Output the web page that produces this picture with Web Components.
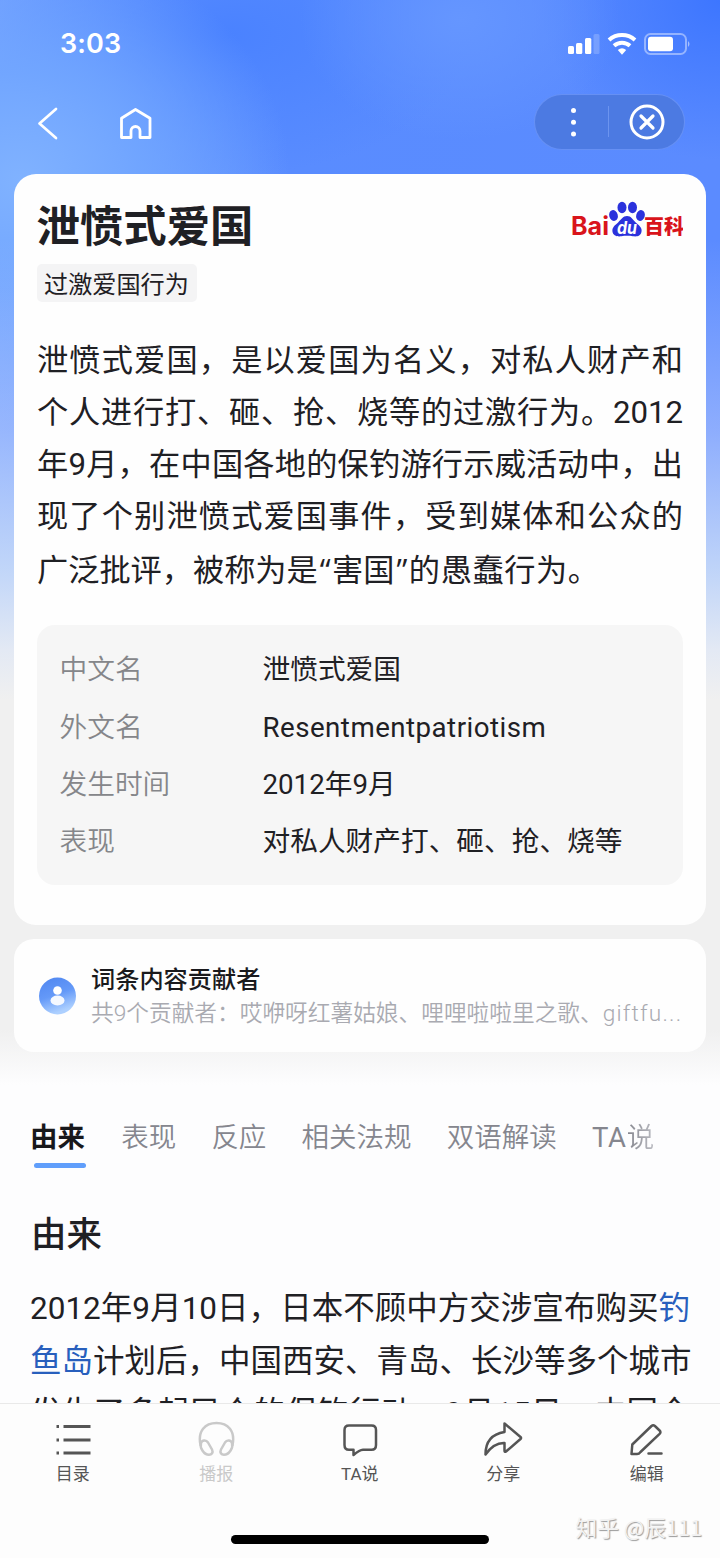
<!DOCTYPE html>
<html lang="zh-CN"><head><meta charset="utf-8"><title>泄愤式爱国</title>
<style>
html,body{margin:0;padding:0;width:720px;height:1558px;overflow:hidden;background:#fdfdfe}
body{font-family:Roboto,"Noto Sans CJK SC",sans-serif;color:#1f2024}
</style></head><body>
<baike-app></baike-app>
<script>
function define(name, css, html){
  customElements.define(name, class extends HTMLElement{
    constructor(){
      super();
      const t=document.createElement('template');
      t.innerHTML='<style>*{box-sizing:border-box}:host{display:block;box-sizing:border-box}'+css+'</style>'+html;
      this.attachShadow({mode:'open'}).appendChild(t.content.cloneNode(true));
    }
  });
}

define('text-line', `
:host{height:52px;line-height:52px;white-space:nowrap;text-align:justify;text-align-last:justify;text-spacing-trim:space-all}
:host([natural]){text-align-last:left}
`, `<slot></slot>`);

define('status-bar', `
:host{height:87px;padding:0 29px 0 60px;display:flex;align-items:center;justify-content:space-between;color:#fff}
span{font:600 27px/34px Inter,sans-serif;letter-spacing:.1px}
svg{display:block}
`, `<span>3:03</span>
<svg width="124" height="26" viewBox="0 0 124 26" fill="#fff">
<rect x="1" y="15" width="6" height="8" rx="1.5"/><rect x="9" y="12" width="6.3" height="11" rx="1.5"/><rect x="18" y="7" width="6.3" height="16" rx="1.5"/><rect x="26.500" y="3" width="6" height="20" rx="1.500" opacity=".2"/>
<g fill="none" stroke="#fff" stroke-width="4"><path d="M42 9a19.500 19.500 0 0 1 26 0"/><path d="M47 14.800a12 12 0 0 1 16 0"/></g><path d="M50.800 19a6.500 6.500 0 0 1 8.400 0L55 23.800Z"/>
<rect x="78" y="3" width="41" height="20" rx="5.500" fill="none" stroke="#fff" stroke-opacity=".42" stroke-width="2"/><rect x="81" y="5.800" width="25" height="14.500" rx="3"/><path d="M121 10q3 3 0 6z" opacity=".5"/>
</svg>`);

define('nav-bar', `
:host{height:87px;padding:8px 36px 0 35px;display:flex;align-items:flex-start;justify-content:space-between}
.left{display:flex;gap:56px;padding-top:10px}
.pill{display:flex;align-items:center;width:149px;height:54px;border-radius:27px;background:#4c7ae2;box-shadow:0 0 0 1px #6690f4;margin-top:0}
svg{display:block}
`, `<div class="left">
<svg width="28" height="36" viewBox="0 0 28 36" fill="none" stroke="#fff" stroke-width="2.700" stroke-linecap="round" stroke-linejoin="round"><path d="M21 4 4.500 18.500 21 33"/></svg>
<svg width="36" height="36" viewBox="0 0 36 36" fill="none" stroke="#fff" stroke-width="2.800" stroke-linejoin="round"><path d="M16.500 4.500 31 13.300V32.500H21V26a4.500 4.500 0 0 0-9 0v6.500H2.500V13.300Z"/></svg>
</div>
<div class="pill"><svg width="149" height="54" viewBox="0 0 149 54"><g fill="#fff"><circle cx="38.500" cy="15.500" r="2.500"/><circle cx="38.500" cy="27.300" r="2.500"/><circle cx="38.500" cy="39" r="2.500"/></g><path d="M73.500 11v31" stroke="#6c94ef"/><g fill="none" stroke="#fff" stroke-width="3"><circle cx="112" cy="27" r="16"/><path d="m106 21 12 12m0-12-12 12" stroke-width="3.200" stroke-linecap="round"/></g></svg></div>`);

define('baike-logo', `
:host{display:grid;width:112px;height:42px}
svg{grid-area:1/1}
`, `<svg width="112" height="42" viewBox="0 0 112 42">
<g fill="#2b32dc"><ellipse cx="42.500" cy="17.500" rx="4.300" ry="5.500" transform="rotate(-15 42.500 17.500)"/><ellipse cx="51" cy="9.500" rx="4.500" ry="5.700"/><ellipse cx="61.500" cy="9.500" rx="4.500" ry="5.700"/><ellipse cx="69.500" cy="17.500" rx="4.300" ry="5.500" transform="rotate(15 69.500 17.500)"/><path d="M56 18c4.200 0 5.700 3.500 8.700 6.500 3.200 2.800 6.700 5.200 5.800 9.300-.8 4.600-5 5-8.600 4.500-3.500-.6-8-.6-11.500 0-4 .6-8.500-.3-9-5-.4-4.200 2.800-6.100 5.700-8.800C50 21.500 52 18 56 18Z"/></g>
<text x="0" y="36.700" font-family="Inter" font-weight="700" font-size="25" fill="#d9141b" textLength="38" lengthAdjust="spacingAndGlyphs">Bai</text>
<text x="46" y="36.200" font-family="Inter" font-weight="700" font-style="italic" font-size="17.500" fill="#fff" textLength="20" lengthAdjust="spacingAndGlyphs">du</text>
<text x="73" y="36.200" font-family="Noto Sans CJK SC" font-weight="900" font-size="20" fill="#d9141b" textLength="40">百科</text></svg>`);

define('info-row', `
:host{display:grid;grid-template-columns:203px 1fr;height:57.400px;align-items:center;font-size:27.700px;line-height:40px;white-space:nowrap;text-spacing-trim:space-all}
.k{color:#85868a;font-weight:350}
`, `<span class="k"><slot name="key"></slot></span><span><slot></slot></span>`);

define('summary-card', `
:host{height:751px;border-radius:22px;background:#fefefe;padding:23px 23px 0}
header{display:flex;justify-content:space-between;height:67px}
h1{margin:2.500px 0 0 -.500px;font-size:43.400px;line-height:56px;font-weight:700}
baike-logo{margin-top:1px}
.tag{display:inline-block;height:38px;padding:1.500px 8px 0 7px;border-radius:5px;background:#f4f4f5;font-size:24.150px;line-height:38px;vertical-align:top}
.intro{margin-top:32.500px;height:260px;font-size:31.200px}
.info{margin-top:30.500px;height:260px;border-radius:18px;background:#f6f6f6;padding:16.500px 23px 0 22.500px}
.q{font-family:"Open Sans";letter-spacing:3.500px;position:relative;left:2px}
`, `<header><h1>泄愤式爱国</h1><baike-logo></baike-logo></header>
<span class="tag">过激爱国行为</span>
<div class="intro"><text-line>泄愤式爱国，是以爱国为名义，对私人财产和</text-line><text-line>个人进行打、砸、抢、烧等的过激行为。2012</text-line><text-line>年9月，在中国各地的保钓游行示威活动中，出</text-line><text-line>现了个别泄愤式爱国事件，受到媒体和公众的</text-line><text-line natural>广泛批评，被称为是<span class="q">“</span>害国<span class="q">”</span><span style="letter-spacing:.6px">的愚蠢行为。</span></text-line></div>
<div class="info"><info-row><span slot="key">中文名</span>泄愤式爱国</info-row><info-row><span slot="key">外文名</span><span style="letter-spacing:.47px">Resentmentpatriotism</span></info-row><info-row><span slot="key">发生时间</span>2012年9月</info-row><info-row><span slot="key">表现</span>对私人财产打、砸、抢、烧等</info-row></div>`);

define('contributor-card', `
:host{display:flex;height:113px;margin-top:14px;border-radius:20px;background:#fefefe;padding:23px 23px 0 25px;gap:15px}
svg{flex:none;margin-top:14.500px}
div{flex:1;min-width:0;white-space:nowrap;text-spacing-trim:space-all}
b{display:block;font-size:24.200px;line-height:35px;font-weight:500;color:#1a1a1d;padding-top:1px}
text-line{height:32px;line-height:32px;font-size:22.700px;font-weight:350;color:#a9aab1;width:588px}
i{font-style:normal;font-weight:300;letter-spacing:1.200px}
`, `<svg width="37" height="38" viewBox="0 0 37 38"><defs><linearGradient id="g" x1="0" y1="0" x2=".35" y2="1"><stop stop-color="#4f86f0"/><stop offset=".55" stop-color="#6499f8"/><stop offset="1" stop-color="#add0ff"/></linearGradient></defs><circle cx="18.500" cy="19" r="18.500" fill="url(#g)"/><circle cx="18.500" cy="13.500" r="4.300" fill="#fff"/><ellipse cx="18.500" cy="23.500" rx="7" ry="5" fill="#f4f8ff"/></svg>
<div><b>词条内容贡献者</b><text-line>共9个贡献者：哎咿呀红薯姑娘、哩哩啦啦里之歌、<i>giftfu...</i></text-line></div>`);

define('section-tabs', `
:host{display:flex;gap:35.200px;height:60px;margin-top:66px;padding-left:30px;font-size:27.500px;line-height:40px;color:#85868e;font-weight:350;white-space:nowrap}
.on{color:#18181b;font-weight:700}
.on::after{content:"";display:block;width:52px;height:5px;border-radius:2.500px;background:#609efb;margin:5px 0 0 4px}
`, `<span class="on">由来</span><span>表现</span><span>反应</span><span>相关法规</span><span>双语解读</span><span><span style="letter-spacing:.8px;font-weight:400">TA</span><span style="background:linear-gradient(90deg,#85868e,#bbbcc2);-webkit-background-clip:text;color:transparent">说</span></span>`);

define('article-section', `
:host{height:225px;overflow:hidden;padding:32px 30px 0;font-size:31.500px}
h2{margin:0 0 0 1px;font-size:35.500px;line-height:50px;font-weight:500;height:70px}
text-line{height:52.500px}
a{color:#285fbd}
.body{margin-top:3px}
`, `<h2>由来</h2><div class="body"><text-line>2012年9月10日，日本不顾中方交涉宣布购买<a>钓</a></text-line><text-line><a>鱼岛</a>计划后，中国西安、青岛、长沙等多个城市</text-line><text-line>发生了多起民众的保钓行动。9月15日，中国全</text-line></div>`);

define('tool-item', `
:host{display:flex;flex-direction:column;align-items:center;padding-top:14px;font-size:17px;line-height:24px;color:#555}
:host([muted]){color:#c9c9c9}
::slotted(svg){display:block;width:40px;height:40px;fill:none;stroke:currentColor;stroke-width:2.500;stroke-linejoin:round;stroke-linecap:round}
span{margin-top:4px}
`, `<slot name="icon"></slot><span><slot></slot></span>`);

define('tool-bar', `
:host{height:155px;border-top:1px solid #e9e9e9;background:#fdfdfd;position:relative}
nav{display:grid;grid-template-columns:repeat(5,143.500px);padding-left:1px;height:131px}
.home{width:258px;height:9px;border-radius:5px;background:#000;margin:0 auto}
.mark{position:absolute;right:18px;top:109px;font-size:21.700px;line-height:28px;color:#f2f2f2;text-shadow:1px 1px 1px #999;white-space:nowrap}
.mark i{font-style:normal;font-family:"Noto Sans CJK SC"}
`, `<nav>
<tool-item><svg slot="icon" viewBox="0 0 40 40"><path d="M10.500 8.500H37.500M10.500 22H37.500M10.500 35H37.500" stroke-linecap="butt" stroke-width="2.800"/><path d="M3.500 8.500h2.500M3.500 22h2.500M3.500 35h2.500" stroke-linecap="butt" stroke-width="2.800"/></svg>目录</tool-item>
<tool-item muted><svg slot="icon" viewBox="0 0 40 40"><path d="M4.500 27C1.500 13 9 5 20.500 5s19 8 16 22"/><path d="M5 25c1-3 5-3.500 7-.5l4 7c1.500 3-.3 5.300-3 5.300-5 0-9.500-6.800-8-11.800ZM36 25c-1-3-5-3.500-7-.5l-4 7c-1.500 3 .3 5.300 3 5.300 5 0 9.500-6.800 8-11.800Z"/></svg>播报</tool-item>
<tool-item><svg slot="icon" viewBox="0 0 40 40"><path d="M9 7.500h22.500q4.500 0 4.500 4.500v15q0 4.800-4.500 4.800H23q-3.500.2-9.500 5.200v-5.200H9Q4.500 31.800 4.500 27V12Q4.500 7.500 9 7.500Z"/></svg>TA说</tool-item>
<tool-item><svg slot="icon" viewBox="0 0 40 40"><path d="M21.500 5.500 37.500 19q1 1 0 2L23 33.500q-1.500 1-1.500-1V25Q11 24.500 2.500 36.500 2.500 17 21.500 14Z"/></svg>分享</tool-item>
<tool-item><svg slot="icon" viewBox="0 0 40 40"><path d="m4.500 36 .8-9.500L24.500 8q1.700-1.500 3.400 0l4.700 4.500q1.700 1.700 0 3.400L13.500 34q-1.500 2-3.500 2ZM21.500 35.500H34.500"/></svg>编辑</tool-item>
</nav><div class="home"></div><div class="mark"><i>知乎 @辰111</i></div>`);

define('baike-app', `
:host{width:720px;height:1558px;display:flex;flex-direction:column;overflow:hidden;background:linear-gradient(180deg,#f0f0f0 0 1030px,#fdfdfe 1085px)}
:host>*{flex:none}
.hero{height:1052px;padding:0;background:
linear-gradient(180deg,rgba(187,204,252,0) 240px,rgba(187,204,252,.52) 430px,rgba(202,220,248,.9) 570px,#e3e9f4 650px,#f0f0f0 700px) 0 0/100% 708px no-repeat,
radial-gradient(ellipse 270px 240px at 20px 180px,#80b2ff 0,#72a7ffdd 45%,#6b9dff00 100%) 0 0/100% 600px no-repeat,
radial-gradient(ellipse 160px 120px at 460px 20px,#6596ff 0,#6093ff00 100%) 0 0/100% 600px no-repeat,
radial-gradient(ellipse 180px 160px at 720px 0,#3d76ff 0,#3d76ff00 100%) 0 0/100% 600px no-repeat,
radial-gradient(ellipse 240px 140px at 230px 35px,#4a82ff 0,#4a82ff00 100%) 0 0/100% 600px no-repeat,
linear-gradient(90deg,#709fff,#598cff 40%,#5b8bff) 0 0/100% 706px no-repeat}
main{padding:0 14px}
`, `<div class="hero"><status-bar></status-bar><nav-bar></nav-bar><main><summary-card></summary-card><contributor-card></contributor-card></main></div>
<section-tabs></section-tabs><article-section></article-section><tool-bar></tool-bar>`);
</script></body></html>
